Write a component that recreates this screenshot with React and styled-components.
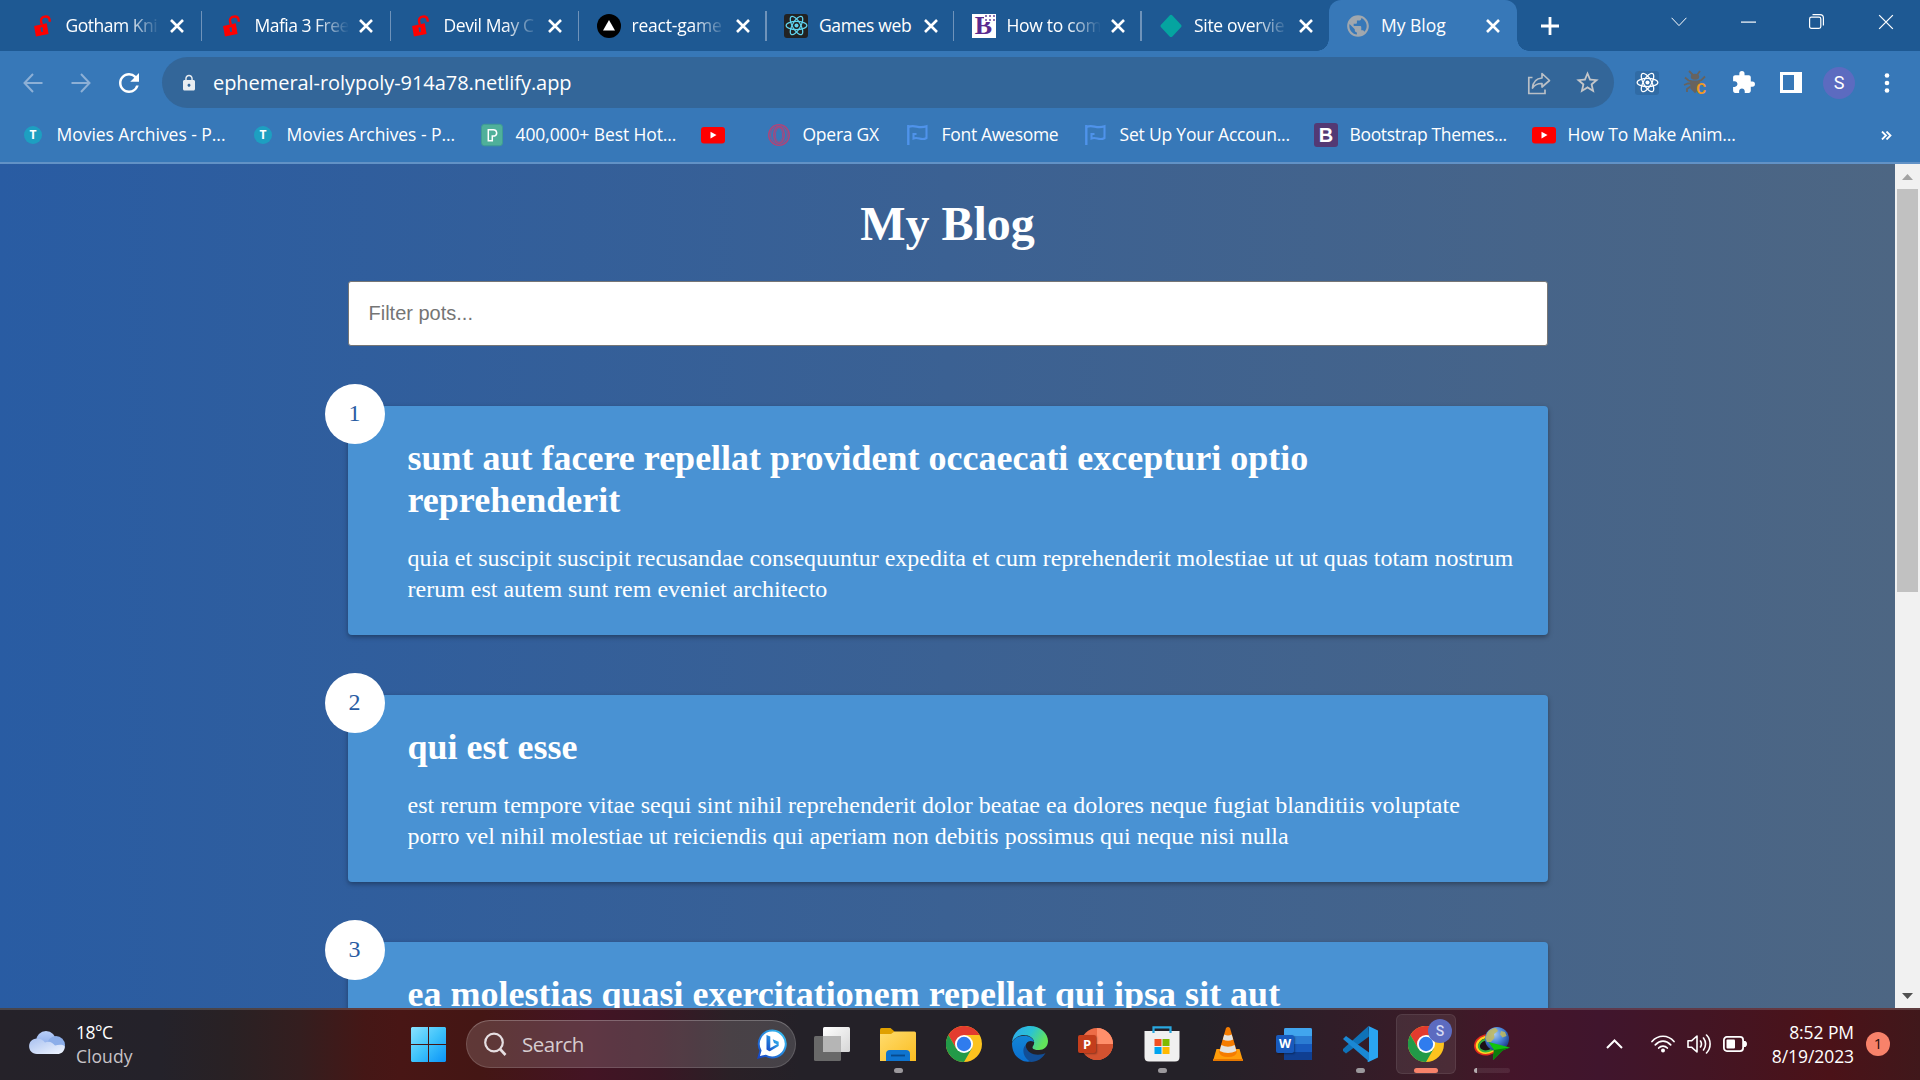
import React from "react";
import styled, { createGlobalStyle, css } from "styled-components";
import { MdExtension, MdLock, MdPublic, MdRefresh, MdStarBorder } from "react-icons/md";

const ui = `"Open Sans", "Noto Sans", sans-serif`;

const GlobalStyle = createGlobalStyle`
  *, *::before, *::after { box-sizing: border-box; }
  html, body { margin: 0; padding: 0; overflow: hidden; }
  svg { display: block; flex: none; }
`;

const Screen = styled.div`
  display: flex;
  flex-direction: column;
  width: 1920px;
  height: 1080px;
  overflow: hidden;
  font-family: ${ui};
  color: #fff;
`;

/* ---------- browser chrome ---------- */

const TabStrip = styled.div`
  display: flex;
  height: 51px;
  padding-left: 13px;
  background: #1e5993;
`;

const TabItem = styled.div`
  position: relative;
  display: flex;
  align-items: center;
  flex: none;
  width: ${(p) => p.$w}px;
  height: 51px;
  padding-left: 17.5px;
  ${(p) =>
    p.$active &&
    css`
      background: #3778b8;
      border-radius: 12px 12px 0 0;
      &::before,
      &::after {
        content: "";
        position: absolute;
        bottom: 0;
        width: 12px;
        height: 12px;
      }
      &::before {
        left: -12px;
        background: radial-gradient(circle at 0 0, transparent 11.5px, #3778b8 12px);
      }
      &::after {
        right: -12px;
        background: radial-gradient(circle at 100% 0, transparent 11.5px, #3778b8 12px);
      }
    `}
`;

const TabIcon = styled.div`
  display: flex;
  align-items: center;
  justify-content: center;
  flex: none;
  width: 24px;
  height: 24px;
`;

const TabTitle = styled.div`
  width: 97px;
  margin-left: 11px;
  padding-bottom: 1px;
  overflow: hidden;
  white-space: nowrap;
  font-size: 17.5px;
  line-height: 30px;
  letter-spacing: ${(p) => p.$track || 0}px;
  mask-image: linear-gradient(to right, #000 62%, transparent 97%);
  ${(p) => p.$full && "mask-image: none;"}
`;

const TabClose = styled.div`
  margin-left: 7.5px;
`;

const TabRule = styled.div`
  width: 1.5px;
  height: 30px;
  margin-left: auto;
  background: #6f93ba;
`;

const NewTab = styled.div`
  display: flex;
  align-items: center;
  justify-content: center;
  width: 65px;
  height: 51px;
`;

const WindowControls = styled.div`
  display: flex;
  margin-left: auto;
`;

const WindowButton = styled.div`
  display: flex;
  align-items: center;
  justify-content: center;
  width: 68.8px;
  height: 43px;
`;

const Toolbar = styled.div`
  height: 113px;
  background: #3778b8;
  border-bottom: 2px solid #6292c6;
`;

const AddressRow = styled.div`
  display: flex;
  align-items: center;
  height: 63px;
  padding: 0 9px;
`;

const ToolButton = styled.div`
  display: flex;
  align-items: center;
  justify-content: center;
  flex: none;
  width: 48px;
  height: 48px;
`;

const Omnibox = styled.div`
  display: flex;
  align-items: center;
  flex: 1;
  height: 51px;
  margin: 0 9px;
  padding: 0 3px 0 18px;
  border-radius: 26px;
  background: #336699;
`;

const Url = styled.div`
  flex: 1;
  margin-left: 15px;
  font-size: 20px;
  line-height: 30px;
  letter-spacing: -0.05px;
`;

const ReactTile = styled.div`
  display: flex;
  align-items: center;
  justify-content: center;
  width: 24px;
  height: 24px;
  border-radius: 3px;
  background: ${(p) => p.$bg};
`;

const Avatar = styled.div`
  width: 32px;
  height: 32px;
  border-radius: 50%;
  background: #5c6bc0;
  font: 400 18px/32px Roboto, sans-serif;
  text-align: center;
`;

const BookmarkRow = styled.div`
  display: flex;
  align-items: center;
  height: 48px;
  margin-top: -3px;
  padding: 0 28px 0 21px;
`;

const Bookmark = styled.div`
  display: flex;
  align-items: center;
  gap: 11.5px;
  width: ${(p) => p.$w}px;
  font-size: 17.5px;
  line-height: 28px;
  white-space: nowrap;
`;

const BookmarkText = styled.span`
  padding-bottom: 2px;
  letter-spacing: ${(p) => p.$track || 0}px;
`;

const LetterMark = styled.span`
  display: block;
  width: ${(p) => p.$size}px;
  height: ${(p) => p.$size}px;
  border-radius: ${(p) => p.$radius};
  background: ${(p) => p.$bg};
  color: #fff;
  font: ${(p) => p.$font};
  line-height: ${(p) => p.$size}px;
  text-align: center;
`;

const More = styled.div`
  margin-left: auto;
`;

/* ---------- page ---------- */

const Viewport = styled.div`
  display: flex;
  height: 844px;
`;

const Page = styled.main`
  display: flex;
  flex-direction: column;
  align-items: center;
  width: 1895px;
  height: 844px;
  padding-top: 32px;
  overflow: hidden;
  background: linear-gradient(to right, #295ca3, #4d6683);
  font-family: "Liberation Serif", "Times New Roman", serif;
`;

const PageTitle = styled.h1`
  margin: 0 0 30px;
  font-size: 48px;
  line-height: 55px;
  font-weight: 700;
`;

const Filter = styled.input`
  flex: none;
  width: 1200px;
  height: 65px;
  margin: 0 0 60px;
  padding: 0 20px;
  border: 1px solid #767676;
  border-radius: 3px;
  background: #fff;
  font: 20px "Liberation Sans", Arial, sans-serif;
  &::placeholder {
    color: #757575;
    opacity: 1;
  }
`;

const Post = styled.article`
  position: relative;
  flex: none;
  width: 1200px;
  margin-bottom: 60px;
  padding: 31px 30px 29.6px 60px;
  border-radius: 4px;
  background: #4992d3;
  box-shadow: 0 2px 5px rgba(0, 0, 0, 0.35);
`;

const PostNumber = styled.div`
  position: absolute;
  top: -22px;
  left: -23px;
  width: 60px;
  height: 60px;
  border-radius: 50%;
  background: #fff;
  color: #295ca3;
  font-size: 24px;
  line-height: 59px;
  text-align: center;
`;

const PostTitle = styled.h2`
  margin: 0 0 21.8px;
  font-size: 36px;
  line-height: 42px;
  font-weight: 700;
`;

const PostBody = styled.p`
  margin: 0;
  font-size: 24px;
  line-height: 31.2px;
`;

const Scrollbar = styled.div`
  display: flex;
  flex-direction: column;
  align-items: center;
  justify-content: space-between;
  width: 25px;
  background: #f1f1f1;
`;

const ScrollTop = styled.div`
  display: flex;
  flex-direction: column;
  align-items: center;
`;

const ScrollArrow = styled.div`
  display: flex;
  align-items: center;
  justify-content: center;
  height: 25px;
`;

const ScrollThumb = styled.div`
  width: 21px;
  height: 403px;
  background: #c1c1c1;
`;

/* ---------- taskbar ---------- */

const Taskbar = styled.div`
  display: flex;
  align-items: center;
  height: 72px;
  padding-bottom: 2px;
  border-top: 2px solid rgba(255, 255, 255, 0.16);
  background: linear-gradient(
    to right,
    #252229 0,
    #24222a 160px,
    #292124 230px,
    #341e1f 300px,
    #451716 365px,
    #481615 400px,
    #441614 480px,
    #431424 590px,
    #391724 660px,
    #2a2026 730px,
    #242128 800px,
    #242128 1200px,
    #301d28 1330px,
    #3c1b27 1450px,
    #44152a 1510px,
    #40152d 1600px,
    #431524 1700px,
    #4b1218 1830px,
    #40181b 1920px
  );
  background-clip: border-box;
  background-origin: border-box;
`;

const Weather = styled.div`
  display: flex;
  align-items: center;
  gap: 11px;
  width: 382px;
  padding-left: 29px;
`;

const WeatherText = styled.div`
  padding-bottom: 1px;
  font-size: 17.5px;
  line-height: 24px;
  letter-spacing: -0.5px;
`;

const Muted = styled.div`
  color: #c8c4c8;
  letter-spacing: 0.05px;
`;

const StartButton = styled.div`
  display: flex;
  align-items: center;
  justify-content: center;
  width: 84px;
  padding-left: 8px;
`;

const SearchBox = styled.div`
  display: flex;
  align-items: center;
  width: 330px;
  height: 48px;
  padding: 0 8px 0 16px;
  border: 1.5px solid rgba(255, 255, 255, 0.14);
  border-top-color: rgba(255, 255, 255, 0.24);
  border-radius: 24px;
  background: rgba(255, 255, 255, 0.15);
`;

const SearchLabel = styled.span`
  flex: 1;
  margin-left: 15px;
  color: #d6ccd0;
  font-size: 20.5px;
  line-height: 28px;
  letter-spacing: -0.5px;
`;

const Apps = styled.div`
  display: flex;
  margin-left: 3px;
`;

const AppSlot = styled.div`
  position: relative;
  display: flex;
  align-items: center;
  justify-content: center;
  width: 60px;
  height: 60px;
  margin: 0 3px;
  border-radius: 6px;
  ${(p) =>
    p.$active &&
    css`
      background: rgba(255, 255, 255, 0.08);
      box-shadow: inset 0 0 0 1px rgba(255, 255, 255, 0.08);
    `}
`;

const Indicator = styled.div`
  position: absolute;
  bottom: 1px;
  left: ${(p) => 30 - p.$w / 2}px;
  width: ${(p) => p.$w}px;
  height: 5px;
  border-radius: 3px;
  background: ${(p) => p.$bg || "#9b989c"};
`;

const ProfileBadge = styled.div`
  position: absolute;
  top: 5px;
  right: 4px;
  width: 24px;
  height: 24px;
  border-radius: 50%;
  background: #5c6bc0;
  color: #d4d8f3;
  font: 500 14px/24px Roboto, sans-serif;
  text-align: center;
`;

const OfficeIcon = styled.div`
  position: relative;
  width: 36px;
  height: 36px;
`;

const OfficeLetter = styled.div`
  position: absolute;
  top: 9px;
  left: 0;
  width: 18px;
  height: 18px;
  border-radius: 2px;
  background: ${(p) => p.$bg};
  box-shadow: 1px 1px 2px rgba(0, 0, 0, 0.35);
  font: 700 ${(p) => p.$size || 13}px/18px "Open Sans", sans-serif;
  text-align: center;
`;

const Tray = styled.div`
  display: flex;
  align-items: center;
  gap: 12px;
  margin-left: auto;
  padding-right: 30px;
`;

const Chevron = styled.div`
  margin-right: 16px;
`;

const Clock = styled.div`
  width: 95px;
  padding-bottom: 1px;
  font-size: 17.5px;
  line-height: 24px;
  text-align: right;
  white-space: nowrap;
  letter-spacing: -0.08px;
`;

const Notice = styled.div`
  width: 24px;
  height: 24px;
  border-radius: 50%;
  background: #f8826a;
  color: #1d0c0a;
  font-size: 15px;
  line-height: 23px;
  text-align: center;
`;

/* ---------- drawings ---------- */

const Cross = ({ size = 14, width = 2.6 }) => (
  <svg width={size} height={size} viewBox="0 0 14 14" stroke="#fff" strokeWidth={width}>
    <path d="M1 1L13 13M13 1L1 13" />
  </svg>
);

const OpenLock = () => (
  <svg width="20" height="22" viewBox="0 0 24 26">
    <path d="M10.500 11L9.600 7C9.200 1 18.500-.600 20 5.500V8" fill="none" stroke="#f00" strokeWidth="2.800" />
    <path d="M1.300 13L16.500 9.800 18.700 22.600 3.500 25.500z" fill="#f00" />
    <path d="M8.800 15.800a1.700 1.700 0 0 1 3.200-.500l-.500 1.700.500 2.800-2 .400-.500-2.800z" fill="#1e5993" />
  </svg>
);

const Vercel = () => (
  <svg width="24" height="24" viewBox="0 0 24 24">
    <circle cx="12" cy="12" r="12" fill="#000" />
    <path d="M12 6l6 10.500H6z" fill="#fff" />
  </svg>
);

const Atom = ({ color }) => (
  <svg width="23" height="23" viewBox="-12 -12 24 24" fill="none" stroke={color} strokeWidth="1.3">
    <circle r="2.1" fill={color} stroke="none" />
    <ellipse rx="10.8" ry="4.2" />
    <ellipse rx="10.8" ry="4.2" transform="rotate(60)" />
    <ellipse rx="10.8" ry="4.2" transform="rotate(120)" />
  </svg>
);

const Bulma = styled.div`
  position: relative;
  width: 24px;
  height: 24px;
  background: #fff;
  color: #5b2a90;
  font: 700 26px/24px "Liberation Serif", serif;
  text-align: center;
`;

const Specks = styled.div`
  position: absolute;
  top: 0;
  right: 0;
  width: 12px;
  height: 8px;
  background: radial-gradient(circle, #8d72b3 0.8px, #fff 1.3px) 0 0 / 4px 4px;
`;

const Diamond = () => (
  <svg width="24" height="24" viewBox="0 0 24 24">
    <path d="M12 .8Q12.8.8 13.4 1.6L22.2 11Q23 12 22.2 13L13.4 22.4Q12 23.6 10.6 22.4L1.8 13Q1 12 1.8 11L10.6 1.6Q11.2.8 12 .8z" fill="#05a4a0" />
  </svg>
);

const Youtube = () => (
  <svg width="24" height="24" viewBox="0 0 24 24">
    <rect y="4" width="24" height="16.5" rx="3" fill="#f00" />
    <path d="M9.5 8.7l6 3.4-6 3.4z" fill="#fff" />
  </svg>
);

const Pexels = () => (
  <svg width="24" height="24" viewBox="0 0 24 24">
    <rect x="1.5" y="1.3" width="21" height="21.5" rx="3" fill="#4fb09a" stroke="#3f9c93" />
    <path d="M8.3 6.700h5a3.300 3.300 0 0 1 1.200 6.400h-2.200v4.700H8.300z" fill="none" stroke="#fff" strokeWidth="1.500" />
  </svg>
);

const Opera = () => (
  <svg width="24" height="24" viewBox="0 0 24 24" fill="none" stroke="#b34377" strokeWidth="1.3">
    <circle cx="12" cy="12" r="10.3" />
    <circle cx="12" cy="12" r="8.5" strokeWidth=".8" />
    <ellipse cx="12" cy="12" rx="5.2" ry="8.5" />
    <ellipse cx="12" cy="12" rx="3.6" ry="7.2" strokeWidth=".8" />
  </svg>
);

const Flag = () => (
  <svg width="24" height="24" viewBox="0 0 24 24" fill="none" stroke="#4f93ea" strokeWidth="2.1">
    <path d="M2.300 2V22" strokeWidth="2.400" />
    <path d="M2.500 4C9 1 12 6.300 20.500 3.300V15C15 18.300 12.500 13.400 7.500 15.500V11H10.500" />
  </svg>
);

const Bug = () => (
  <svg width="24" height="26" viewBox="0 0 24 26" fill="none" stroke="#67635f" strokeWidth="1.8">
    <path d="M6 1l4 4M17 1l-3 4M2 7.500l3.500 3 3 .800M22 6.500L18.500 10l-3 .800M1 15l4-1.500 3-.200M7.500 16.500L4 19v3" />
    <ellipse cx="12" cy="6.800" rx="4.300" ry="3" fill="#67635f" stroke="none" />
    <path d="M7 10.500h10l-.800 8.200-4.200 4.500-4.500-4.500z" fill="#67635f" stroke="none" />
  </svg>
);

const BugBox = styled.div`
  position: relative;
`;

const BugLetter = styled.span`
  position: absolute;
  right: 1px;
  bottom: -1px;
  color: #f29a1f;
  font: 700 15px/15px Roboto, sans-serif;
`;

const Cloud = () => (
  <svg width="36" height="26" viewBox="0 0 36 26">
    <defs>
      <linearGradient id="cl1" x1="0" y1="0" x2="0" y2="1">
        <stop offset="0" stopColor="#b9cff9" />
        <stop offset="1" stopColor="#7c9fe4" />
      </linearGradient>
      <linearGradient id="cl2" x1="0" y1="0" x2="1" y2="1">
        <stop offset="0" stopColor="#a9c1f0" />
        <stop offset="1" stopColor="#f1f6ff" />
      </linearGradient>
    </defs>
    <circle cx="17" cy="10" r="10" fill="url(#cl1)" />
    <circle cx="27" cy="14" r="9" fill="#8caee9" />
    <path d="M8 7.500c5 0 7 3 8 4 5-2 8 1 10 3 4-1 9-1 9.800 1 0 5-3.800 7.500-7.500 7.500H8C-2.500 23-2.500 7.500 8 7.500z" fill="url(#cl2)" />
  </svg>
);

const WindowsLogo = () => (
  <svg width="35" height="35" viewBox="0 0 35 35">
    <defs>
      <linearGradient id="win" x1="0" y1="0" x2="1" y2="1">
        <stop offset="0" stopColor="#8ae2ff" />
        <stop offset=".5" stopColor="#3fc3fb" />
        <stop offset="1" stopColor="#0a93f8" />
      </linearGradient>
    </defs>
    <path d="M1 0H17V17H0V1zM18 0H34L35 1V17H18zM0 18H17V35H1L0 34zM18 18H35V34L34 35H18z" fill="url(#win)" />
  </svg>
);

const BingChat = () => (
  <svg width="30" height="31" viewBox="0 0 30 31">
    <defs>
      <linearGradient id="bing" x1="1" y1="0" x2="0" y2="1">
        <stop offset="0" stopColor="#37c5f3" />
        <stop offset="1" stopColor="#1646c6" />
      </linearGradient>
    </defs>
    <path d="M15.500 1.500A13.500 13.500 0 1 1 8.500 26.700L1.500 28.500 3.500 21.500A13.500 13.500 0 0 1 15.500 1.500z" fill="#fff" stroke="url(#bing)" strokeWidth="2" />
    <path d="M9.500 6l3.800 1.500V19L20 15.300l-3-1.400-1.300-3.600 6 2.400v4.300L13.300 22l-1 .300-2.800-1.800z" fill="url(#bing)" />
  </svg>
);

const TaskView = () => (
  <svg width="36" height="34" viewBox="0 0 36 34">
    <defs>
      <linearGradient id="tv" x1="0" y1="0" x2="1" y2="1">
        <stop offset="0" stopColor="#fff" />
        <stop offset="1" stopColor="#d6d6d6" />
      </linearGradient>
    </defs>
    <rect y="9" width="27" height="25" rx="1.500" fill="#696969" />
    <rect x="9" width="27" height="25" rx="1.500" fill="url(#tv)" />
    <path d="M9 9H27V25H10.500L9 23.500z" fill="#b5b5b5" />
  </svg>
);

const Folder = () => (
  <svg width="36" height="33" viewBox="0 0 36 33">
    <defs>
      <linearGradient id="fo" x1="0" y1="0" x2="1" y2="1">
        <stop offset="0" stopColor="#ffdc6e" />
        <stop offset="1" stopColor="#fbbd20" />
      </linearGradient>
    </defs>
    <path d="M0 1.500Q0 0 1.500 0H10.500L14.500 3.500 12 8H0z" fill="#e0a000" />
    <path d="M0 6H11L14.500 3.500H34.500Q36 3.500 36 5V33H0z" fill="url(#fo)" />
    <path d="M6 33V26Q6 22 10 22H26Q30 22 30 26V33z" fill="#0f74cf" />
    <path d="M11 27.500H25" stroke="#074a8c" strokeWidth="1.800" />
  </svg>
);

const Chrome = () => (
  <svg width="36" height="36" viewBox="-18 -18 36 36">
    <circle r="18" fill="#fcc31e" />
    <path d="M-15.600-9A18 18 0 0 1 15.600-9H0L-7.800 4.500z" fill="#e33b2e" />
    <path d="M-15.600-9A18 18 0 0 0 0 18L7.800 4.500H-7.800z" fill="#229a48" />
    <circle r="9" fill="#fff" />
    <circle r="7.200" fill="#2f7cee" />
  </svg>
);

const Edge = () => (
  <svg width="36" height="36" viewBox="0 0 36 36">
    <defs>
      <linearGradient id="ed1" x1="0" y1="0" x2="1" y2=".4">
        <stop offset="0" stopColor="#2ca5f2" />
        <stop offset=".55" stopColor="#2bc3d2" />
        <stop offset="1" stopColor="#62e35a" />
      </linearGradient>
      <linearGradient id="ed2" x1="0" y1="0" x2="0" y2="1">
        <stop offset="0" stopColor="#1285d6" />
        <stop offset="1" stopColor="#0b6fd0" />
      </linearGradient>
    </defs>
    <path d="M0 16C1 6 9 0 18 0c10.500 0 18 7.500 18 15 0 6-4.500 9-9 9-4.500 0-6.500-1.300-6.500-2.600 0-1.200 1.700-2 1.700-4.900C22 11 14 7 7 10Q2 12 0 16z" fill="url(#ed1)" />
    <path d="M0 17C3 8 20 7 22 16c-5-3-9 1-8.500 6C14 29 19 32 24 33 19 36.500 13 36.500 8.500 33.500 2 30 0 23 0 17z" fill="url(#ed2)" />
    <path d="M13.500 19C9.500 23 11 32 19 36 25 36 31 32 33.500 27 28 30 15 30 13.500 19z" fill="#124e96" />
  </svg>
);

const PowerPoint = () => (
  <OfficeIcon>
    <svg width="36" height="36" viewBox="0 0 36 36">
      <circle cx="19" cy="18" r="16" fill="#ed6c47" />
      <path d="M19 2A16 16 0 0 1 35 18H19z" fill="#ff8f6b" />
      <path d="M35 18A16 16 0 0 1 3 18z" fill="#d35230" />
    </svg>
    <OfficeLetter $bg="#c43e1c">P</OfficeLetter>
  </OfficeIcon>
);

const Word = () => (
  <OfficeIcon>
    <svg width="36" height="36" viewBox="0 0 36 36">
      <rect x="8" y="2" width="28" height="32" rx="1.500" fill="#185abd" />
      <path d="M8 10V3.500Q8 2 9.500 2H34.500Q36 2 36 3.500V10z" fill="#41a5ee" />
      <path d="M8 10H36V18H8z" fill="#2b7cd3" />
      <path d="M8 26H36V32.500Q36 34 34.500 34H9.500Q8 34 8 32.500z" fill="#103f91" />
    </svg>
    <OfficeLetter $bg="#185abd" $size={12.5}>W</OfficeLetter>
  </OfficeIcon>
);

const Store = () => (
  <svg width="36" height="36" viewBox="0 0 36 36">
    <path d="M9.500 7V1.300H26.500V7" fill="none" stroke="#29a8e0" strokeWidth="2.200" />
    <path d="M.500 5H35.500V31Q35.500 35.500 31 35.500H5Q.500 35.500.500 31z" fill="#f0f0f0" />
    <path d="M9.500 7V5M26.500 7V5" stroke="#29a8e0" strokeWidth="2.200" />
    <path d="M10.500 13H17.500V20H10.500z" fill="#f25022" />
    <path d="M18.500 13H25.500V20H18.500z" fill="#7fba00" />
    <path d="M10.500 21H17.500V28H10.500z" fill="#00a4ef" />
    <path d="M18.500 21H25.500V28H18.500z" fill="#ffb900" />
  </svg>
);

const Vlc = () => (
  <svg width="30" height="34" viewBox="0 0 30 34">
    <path d="M3.500 22H26.500L30 34H0z" fill="#ff9d0a" />
    <path d="M0 32H30V34H0z" fill="#e87800" />
    <path d="M13 1Q15-.800 17 1L24 25Q23 30 15 30 7 30 6 25z" fill="#f57c00" />
    <path d="M11.300 7.500Q15 9.500 18.700 7.500L20.200 12.500Q15 15 9.800 12.500zM8.300 18Q15 21.500 21.700 18L23.300 24Q15 28 6.700 24z" fill="#e4e2de" />
  </svg>
);

const VsCode = () => (
  <svg width="36" height="36" viewBox="0 0 36 36">
    <path d="M26.500 0L1 23 1 25 4 27.500 27 10.500z" fill="#0f72b8" />
    <path d="M1 13L4 10 27 26.500V35.500z" fill="#1a88d4" />
    <path d="M26.500 0L36 4.500V31.500L26.500 36 25 35 27 34V2z" fill="#2aa5f1" />
  </svg>
);

const Idm = () => (
  <svg width="36" height="34" viewBox="0 0 36 34">
    <defs>
      <radialGradient id="idm" cx=".4" cy=".3" r=".75">
        <stop offset="0" stopColor="#a9caef" />
        <stop offset=".45" stopColor="#4c88dc" />
        <stop offset="1" stopColor="#16357f" />
      </radialGradient>
    </defs>
    <g fill="none" transform="rotate(-14 12 18)">
      <ellipse cx="13" cy="18" rx="12" ry="9.500" stroke="#e32b1e" strokeWidth="2.200" />
      <ellipse cx="13" cy="18" rx="10.200" ry="7.800" stroke="#ffd21f" strokeWidth="2.400" />
      <ellipse cx="13" cy="18.500" rx="8.400" ry="6" fill="#1c1216" stroke="#37b53c" strokeWidth="2" />
    </g>
    <circle cx="23" cy="12" r="12" fill="url(#idm)" />
    <path d="M13.500 5.500Q17 1 22 1L24 4 20 7 20.500 11 17 15 13 15 11.300 11zM27 4l4 1 1.500 4-4 1.500-2.500-3z" fill="#c3bb5c" opacity=".85" />
    <path d="M14.500 15L36 20.500 28.500 23.500 19 33 20 23z" fill="#12c40e" />
    <path d="M20 23L36 20.500 28.500 23.500 19 33z" fill="#0a7d0c" />
  </svg>
);

/* ---------- data ---------- */

const tabs = [
  { w: 189, title: "Gotham Kni", icon: <OpenLock />, track: -0.5 },
  { w: 189, title: "Mafia 3 Free", icon: <OpenLock />, track: -0.5 },
  { w: 188, title: "Devil May C", icon: <OpenLock />, track: -0.4 },
  { w: 187.5, title: "react-game", icon: <Vercel />, track: -0.2 },
  { w: 187.5, title: "Games web", icon: <ReactTile $bg="#222"><Atom color="#5fd3ee" /></ReactTile>, track: -0.35, full: true },
  { w: 187.5, title: "How to com", icon: <Bulma>B<Specks /></Bulma>, track: -0.3 },
  { w: 187, title: "Site overvie", icon: <Diamond />, track: -0.3, last: true },
  { w: 188.5, title: "My Blog", icon: <MdPublic size={26} color="#a0a7ae" />, track: 0, full: true, active: true },
];

const TMark = () => (
  <TabIcon>
    <LetterMark $size={18} $radius="50%" $bg="#1d9fc1" $font='700 12px "Open Sans", sans-serif'>T</LetterMark>
  </TabIcon>
);

const bookmarks = [
  { w: 230, label: "Movies Archives - P...", icon: <TMark />, track: -0.04 },
  { w: 229, label: "Movies Archives - P...", icon: <TMark />, track: -0.06 },
  { w: 221, label: "400,000+ Best Hot...", icon: <Pexels />, track: -0.1 },
  { w: 66, label: "", icon: <Youtube /> },
  { w: 139, label: "Opera GX", icon: <Opera />, track: -0.25 },
  { w: 178, label: "Font Awesome", icon: <Flag />, track: -0.3 },
  { w: 230, label: "Set Up Your Accoun...", icon: <Flag />, track: -0.2 },
  {
    w: 218,
    label: "Bootstrap Themes...",
    icon: (
      <LetterMark $size={24} $radius="3px" $bg="#533974" $font='700 20px "Liberation Sans", sans-serif'>B</LetterMark>
    ),
    track: -0.33,
  },
  { w: 210, label: "How To Make Anim...", icon: <Youtube />, track: -0.18 },
];

const posts = [
  {
    title: "sunt aut facere repellat provident occaecati excepturi optio reprehenderit",
    body: "quia et suscipit suscipit recusandae consequuntur expedita et cum reprehenderit molestiae ut ut quas totam nostrum rerum est autem sunt rem eveniet architecto",
  },
  {
    title: "qui est esse",
    body: "est rerum tempore vitae sequi sint nihil reprehenderit dolor beatae ea dolores neque fugiat blanditiis voluptate porro vel nihil molestiae ut reiciendis qui aperiam non debitis possimus qui neque nisi nulla",
  },
  { title: "ea molestias quasi exercitationem repellat qui ipsa sit aut", body: "" },
];

const apps = [
  { icon: <TaskView /> },
  { icon: <Folder />, mark: 9 },
  { icon: <Chrome /> },
  { icon: <Edge /> },
  { icon: <PowerPoint /> },
  { icon: <Store />, mark: 9 },
  { icon: <Vlc /> },
  { icon: <Word /> },
  { icon: <VsCode />, mark: 9 },
  { icon: <Chrome />, mark: 24, active: true },
  { icon: <Idm />, mark: 36, bg: "linear-gradient(to right, #b5adb0 3px, rgba(255,255,255,.08) 3px)" },
];

function Browser() {
  return (
    <>
      <TabStrip>
        {tabs.map((t) => (
          <TabItem key={t.title} $w={t.w} $active={t.active}>
            <TabIcon>{t.icon}</TabIcon>
            <TabTitle $track={t.track} $full={t.full}>{t.title}</TabTitle>
            <TabClose><Cross /></TabClose>
            {!t.active && !t.last && <TabRule />}
          </TabItem>
        ))}
        <NewTab>
          <svg width="18" height="18" viewBox="0 0 18 18" stroke="#fff" strokeWidth="2.800">
            <path d="M9 0V18M0 9H18" />
          </svg>
        </NewTab>
        <WindowControls>
          <WindowButton>
            <svg width="16" height="10" viewBox="0 0 16 10" fill="none" stroke="#fff" strokeWidth="1">
              <path d="M.600.800L8 8.600 15.400.800" />
            </svg>
          </WindowButton>
          <WindowButton>
            <svg width="15" height="2" viewBox="0 0 15 2"><path d="M0 .500H15V1.700H0z" fill="#fff" /></svg>
          </WindowButton>
          <WindowButton>
            <svg width="15" height="15" viewBox="0 0 15 15" fill="none" stroke="#fff" strokeWidth="1.200">
              <rect x=".600" y="3.200" width="11.200" height="11.200" rx="1.800" />
              <path d="M3.500.600H11Q14.400.600 14.400 4V11.500" />
            </svg>
          </WindowButton>
          <WindowButton><Cross size={16} width={1.1} /></WindowButton>
        </WindowControls>
      </TabStrip>
      <Toolbar>
        <AddressRow>
          <ToolButton>
            <svg width="20" height="20" viewBox="0 0 20 20" fill="none" stroke="#8db0d6" strokeWidth="2">
              <path d="M19.500 10H2M10 1L1.500 10 10 19" />
            </svg>
          </ToolButton>
          <ToolButton>
            <svg width="20" height="20" viewBox="0 0 20 20" fill="none" stroke="#8db0d6" strokeWidth="2">
              <path d="M.500 10H18M10 1L18.500 10 10 19" />
            </svg>
          </ToolButton>
          <ToolButton><MdRefresh size={30} /></ToolButton>
          <Omnibox>
            <MdLock size={18} color="#e9edf1" />
            <Url>ephemeral-rolypoly-914a78.netlify.app</Url>
            <ToolButton>
              <svg width="24" height="24" viewBox="0 0 24 24" fill="none" stroke="#b9bfc6" strokeWidth="1.700">
                <path d="M5.500 6.500H1.800V22.500H18V18.500" />
                <path d="M5.500 17C6 10.500 9 7.500 15 7V2.500L22.500 9.500 15 16V12.500C11 12.300 8 13.500 5.500 17z" strokeLinejoin="round" />
              </svg>
            </ToolButton>
            <ToolButton><MdStarBorder size={27} color="#c4c6c9" /></ToolButton>
          </Omnibox>
          <ToolButton><ReactTile $bg="#306ba5"><Atom color="#fff" /></ReactTile></ToolButton>
          <ToolButton><BugBox><Bug /><BugLetter>C</BugLetter></BugBox></ToolButton>
          <ToolButton><MdExtension size={25} /></ToolButton>
          <ToolButton>
            <svg width="22" height="21" viewBox="0 0 22 21"><path d="M0 0H22V21H0zM3 3V18H14V3z" fillRule="evenodd" fill="#fff" /></svg>
          </ToolButton>
          <ToolButton><Avatar>S</Avatar></ToolButton>
          <ToolButton>
            <svg width="6" height="20" viewBox="0 0 6 20" fill="#fff">
              <circle cx="3" cy="2.500" r="2.300" /><circle cx="3" cy="10" r="2.300" /><circle cx="3" cy="17.500" r="2.300" />
            </svg>
          </ToolButton>
        </AddressRow>
        <BookmarkRow>
          {bookmarks.map((b, i) => (
            <Bookmark key={i} $w={b.w}>
              {b.icon}
              <BookmarkText $track={b.track}>{b.label}</BookmarkText>
            </Bookmark>
          ))}
          <More>
            <svg width="11" height="9" viewBox="0 0 11 9" fill="none" stroke="#fff" strokeWidth="1.800">
              <path d="M1 .500L5 4.500 1 8.500M5.500.500L9.500 4.500 5.500 8.500" />
            </svg>
          </More>
        </BookmarkRow>
      </Toolbar>
    </>
  );
}

function Blog() {
  return (
    <Viewport>
      <Page>
        <PageTitle>My Blog</PageTitle>
        <Filter placeholder="Filter pots..." />
        {posts.map((p, i) => (
          <Post key={p.title}>
            <PostNumber>{i + 1}</PostNumber>
            <PostTitle>{p.title}</PostTitle>
            <PostBody>{p.body}</PostBody>
          </Post>
        ))}
      </Page>
      <Scrollbar>
        <ScrollTop>
          <ScrollArrow><svg width="11" height="6" viewBox="0 0 11 6"><path d="M0 6L5.500 0 11 6z" fill="#a3a3a3" /></svg></ScrollArrow>
          <ScrollThumb />
        </ScrollTop>
        <ScrollArrow><svg width="11" height="6" viewBox="0 0 11 6"><path d="M0 0L5.500 6 11 0z" fill="#505050" /></svg></ScrollArrow>
      </Scrollbar>
    </Viewport>
  );
}

function SystemBar() {
  return (
    <Taskbar>
      <Weather>
        <Cloud />
        <WeatherText>18°C<Muted>Cloudy</Muted></WeatherText>
      </Weather>
      <StartButton><WindowsLogo /></StartButton>
      <SearchBox>
        <svg width="24" height="24" viewBox="0 0 24 24" fill="none" stroke="#e6dfe2" strokeWidth="2.200">
          <circle cx="11" cy="10.500" r="8.800" />
          <path d="M17 17L22.500 23" strokeWidth="2.600" />
        </svg>
        <SearchLabel>Search</SearchLabel>
        <BingChat />
      </SearchBox>
      <Apps>
        {apps.map((a, i) => (
          <AppSlot key={i} $active={a.active}>
            {a.icon}
            {a.active && <ProfileBadge>S</ProfileBadge>}
            {a.mark && <Indicator $w={a.mark} $bg={a.active ? "#f8826a" : a.bg} />}
          </AppSlot>
        ))}
      </Apps>
      <Tray>
        <Chevron>
          <svg width="17" height="10" viewBox="0 0 17 10" fill="none" stroke="#fff" strokeWidth="2"><path d="M1 9L8.500 1.500 16 9" /></svg>
        </Chevron>
        <svg width="24" height="18" viewBox="0 0 24 18" fill="none" stroke="#fff" strokeWidth="1.700" strokeLinecap="round">
          <path d="M1 6.500C7-.500 17-.500 23 6.500M4.300 9.800C9 5 15 5 19.700 9.800M7.700 13C10 10.500 14 10.500 16.300 13" />
          <circle cx="12" cy="15.500" r="2" fill="#fff" stroke="none" />
        </svg>
        <svg width="24" height="20" viewBox="0 0 24 20" fill="none" stroke="#fff" strokeWidth="1.600" strokeLinecap="round" strokeLinejoin="round">
          <path d="M1 6.800H4.500L10 2V18L4.500 13.200H1zM13.500 7C14.800 9 14.800 11 13.500 13M16.500 4C19.200 7.500 19.200 12.500 16.500 16M19.500 1C24.300 6 24.300 14 19.500 19" />
        </svg>
        <svg width="24" height="16" viewBox="0 0 24 16">
          <rect x=".900" y=".900" width="19.200" height="14.200" rx="3" fill="none" stroke="#fff" strokeWidth="1.800" />
          <rect x="3.500" y="3.500" width="8.500" height="9" rx="1" fill="#fff" />
          <path d="M21 5H22.500Q24 6 24 8T22.500 11H21z" fill="#fff" />
        </svg>
        <Clock>8:52 PM<br />8/19/2023</Clock>
        <Notice>1</Notice>
      </Tray>
    </Taskbar>
  );
}

export default function App() {
  return (
    <Screen>
      <GlobalStyle />
      <Browser />
      <Blog />
      <SystemBar />
    </Screen>
  );
}
